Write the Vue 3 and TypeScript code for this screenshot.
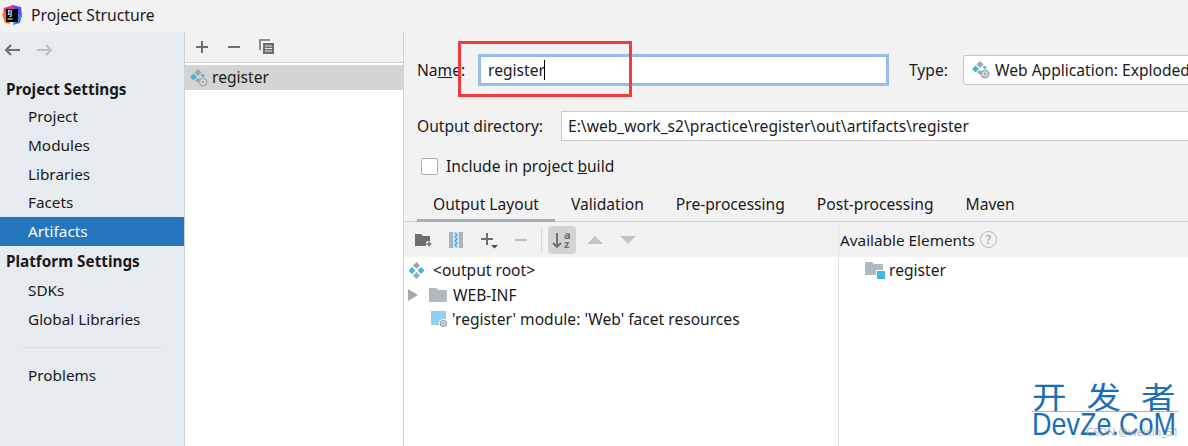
<script setup lang="ts">
const projectItems = ["Project", "Modules", "Libraries", "Facets", "Artifacts"];
const platformItems = ["SDKs", "Global Libraries"];
const tabs = ["Output Layout", "Validation", "Pre-processing", "Post-processing", "Maven"];
</script>

<template>
  <div class="window">
    <header class="titlebar">
      <svg class="logo" width="20" height="20" viewBox="0 0 20 20">
        <path d="M2 3 L11 0 L12 6 L1 10 Z" fill="#f5317f" />
        <path d="M10 0 L19 2 L20 12 L13 10 Z" fill="#5a4ee0" />
        <path d="M0 9 L6 6 L8 19 L3 18 Z" fill="#f97a12" />
        <path d="M13 10 L20 9 L18 18 L11 20 Z" fill="#3a7ff0" />
        <rect x="4" y="4" width="12" height="13" fill="#000" />
        <text x="5.5" y="10" class="logo-text">IJ</text>
        <rect x="5.500" y="13.500" width="5" height="1" fill="#fff" />
      </svg>
      <span>Project Structure</span>
    </header>

    <div class="body">
      <aside class="sidebar">
        <div class="nav-arrows">
          <svg width="18" height="14" viewBox="0 0 18 14">
            <path d="M17 7H3M8 2L3 7l5 5" fill="none" stroke="#6e6e6e" stroke-width="2" />
          </svg>
          <svg width="18" height="14" viewBox="0 0 18 14">
            <path d="M1 7h14M10 2l5 5-5 5" fill="none" stroke="#bdbdbd" stroke-width="2" />
          </svg>
        </div>
        <h3 class="side-heading first">Project Settings</h3>
        <div
          v-for="item in projectItems"
          :key="item"
          class="side-item"
          :class="{ selected: item === 'Artifacts' }"
        >
          {{ item }}
        </div>
        <h3 class="side-heading">Platform Settings</h3>
        <div v-for="item in platformItems" :key="item" class="side-item">{{ item }}</div>
        <div class="side-sep"></div>
        <div class="side-item">Problems</div>
      </aside>

      <section class="artifact-list">
        <div class="list-toolbar">
          <svg width="14" height="14" viewBox="0 0 14 14">
            <path d="M7 1v12M1 7h12" stroke="#6e6e6e" stroke-width="2" />
          </svg>
          <svg width="14" height="14" viewBox="0 0 14 14">
            <path d="M1 7h12" stroke="#6e6e6e" stroke-width="2" />
          </svg>
          <svg width="16" height="16" viewBox="0 0 16 16">
            <path d="M1 11V1h10" fill="none" stroke="#6e6e6e" stroke-width="1.6" />
            <rect x="4" y="4" width="11" height="11" fill="#6e6e6e" />
            <path d="M6 7h7M6 9.500h7M6 12h7" stroke="#e8e8e8" stroke-width="1" />
          </svg>
        </div>
        <div class="artifact-row">
          <svg class="art-icon" width="18" height="18" viewBox="0 0 18 18">
            <path d="M8 0l3.500 3.500L8 7 4.500 3.500Z" fill="#9aa7b0" />
            <path d="M3.500 4.500L7 8l-3.500 3.500L0 8Z" fill="#40b6e0" />
            <path d="M12.500 4.500L15 7l-2 1-2.500-1.500Z" fill="#40b6e0" />
            <path d="M8 9l2 2-2 3-3-3Z" fill="#9aa7b0" />
            <circle cx="13" cy="13" r="4.500" fill="#a5aeb5" />
            <circle cx="13" cy="13" r="2.200" fill="none" stroke="#fff" stroke-width="1" />
          </svg>
          <span>register</span>
        </div>
      </section>

      <main class="detail">
        <div class="name-row">
          <label class="name-label">Na<u>m</u>e:</label>
          <div class="name-input">register<i class="caret"></i></div>
          <label class="type-label">Type:</label>
          <div class="type-select">
            <svg width="18" height="18" viewBox="0 0 18 18">
              <path d="M8 0l3.500 3.500L8 7 4.500 3.500Z" fill="#9aa7b0" />
              <path d="M3.500 4.500L7 8l-3.500 3.500L0 8Z" fill="#40b6e0" />
              <path d="M12.500 4.500L15 7l-2 1-2.500-1.500Z" fill="#40b6e0" />
              <path d="M8 9l2 2-2 3-3-3Z" fill="#9aa7b0" />
              <circle cx="13" cy="13" r="4.500" fill="#a5aeb5" />
              <circle cx="13" cy="13" r="2.200" fill="none" stroke="#fff" stroke-width="1" />
            </svg>
            <span>Web Application: Exploded</span>
          </div>
        </div>

        <div class="output-row">
          <label>Output directory:</label>
          <div class="output-input">E:\web_work_s2\practice\register\out\artifacts\register</div>
        </div>

        <div class="check-row">
          <span class="checkbox"></span>
          <span>Include in project <u>b</u>uild</span>
        </div>

        <nav class="tabs">
          <div v-for="(tab, i) in tabs" :key="tab" class="tab" :class="{ active: i === 0 }">
            {{ tab }}
          </div>
        </nav>

        <div class="layout-pane">
          <div class="left-col">
            <div class="layout-toolbar">
              <svg width="20" height="16" viewBox="0 0 20 16">
                <path d="M1 2h6l2 2h7v10H1Z" fill="#6e6e6e" />
                <path d="M15 9v6M12 12h6" stroke="#f2f2f2" stroke-width="4" />
                <path d="M15 9.500v5M12.500 12h5" stroke="#6e6e6e" stroke-width="1.600" />
              </svg>
              <svg class="zip" width="14" height="18" viewBox="0 0 14 18">
                <rect x="0" y="1" width="14" height="16" fill="#a9b4bb" />
                <rect x="4" y="1" width="6" height="16" fill="#d8e6ec" />
                <path d="M6 2l2 2-2 2 2 2-2 2 2 2-2 2 2 2" fill="none" stroke="#40b6e0" stroke-width="1.500" />
              </svg>
              <svg class="add" width="20" height="18" viewBox="0 0 20 18">
                <path d="M7 2v12M1 8h12" stroke="#6e6e6e" stroke-width="2" />
                <path d="M11 14h7l-3.500 3.500Z" fill="#4a4a4a" />
              </svg>
              <svg class="remove" width="14" height="14" viewBox="0 0 14 14">
                <path d="M1 7h12" stroke="#bcbcbc" stroke-width="2" />
              </svg>
              <span class="tool-sep"></span>
              <span class="sort-btn">
                <svg width="24" height="24" viewBox="0 0 24 24">
                  <path d="M7 5v14M3 15l4 4 4-4" fill="none" stroke="#6e6e6e" stroke-width="1.900" />
                  <text x="14" y="11" class="sort-text">a</text>
                  <text x="14" y="20" class="sort-text">z</text>
                </svg>
              </span>
              <svg class="tri-up" width="16" height="8" viewBox="0 0 16 8">
                <path d="M0 8L8 0l8 8Z" fill="#c4c4c4" />
              </svg>
              <svg class="tri-down" width="16" height="8" viewBox="0 0 16 8">
                <path d="M0 0h16L8 8Z" fill="#c4c4c4" />
              </svg>
            </div>
            <div class="tree">
              <div class="tree-row root">
                <svg width="17" height="17" viewBox="0 0 17 17">
                  <path d="M8.500 0l3.500 3.500L8.500 7 5 3.500Z" fill="#9aa7b0" />
                  <path d="M4 5l3.500 3.500L4 12 .5 8.500Z" fill="#40b6e0" />
                  <path d="M13 5l3.500 3.500L13 12 9.500 8.500Z" fill="#40b6e0" />
                  <path d="M8.500 10l3.500 3.500L8.500 17 5 13.500Z" fill="#9aa7b0" />
                </svg>
                <span>&lt;output root&gt;</span>
              </div>
              <div class="tree-row inf">
                <svg width="10" height="12" viewBox="0 0 10 12">
                  <path d="M0 0l10 6-10 6Z" fill="#a8a8a8" />
                </svg>
                <svg class="folder" width="18" height="14" viewBox="0 0 18 14">
                  <path d="M0 0h7l2 2h9v12H0Z" fill="#aeb9c0" />
                </svg>
                <span>WEB-INF</span>
              </div>
              <div class="tree-row facet">
                <svg width="17" height="18" viewBox="0 0 17 18">
                  <path d="M0 1h15v14H0Z" fill="#8fd2ef" />
                  <circle cx="12.500" cy="13.500" r="4.500" fill="#fff" />
                  <circle cx="12.500" cy="13.500" r="3.600" fill="#9aa7b0" />
                  <circle cx="12.500" cy="13.500" r="1.700" fill="none" stroke="#fff" stroke-width="0.900" />
                </svg>
                <span>'register' module: 'Web' facet resources</span>
              </div>
            </div>
          </div>

          <div class="right-col">
            <div class="avail-head">
              <span>Available Elements</span>
              <span class="help">?</span>
            </div>
            <div class="avail-body">
              <svg width="20" height="18" viewBox="0 0 20 18">
                <path d="M0 1h7l2 2h9v11H0Z" fill="#aeb9c0" />
                <rect x="11" y="9" width="9" height="9" fill="#fff" />
                <rect x="12" y="10" width="8" height="8" fill="#40b6e0" />
              </svg>
              <span>register</span>
            </div>
          </div>
        </div>
      </main>
    </div>

    <div class="red-box"></div>

    <div class="watermark">
      <div class="wm-cn"><span>开发者</span></div>
      <div class="wm-en">DevZe.CoM</div>
      <div class="wm-faint">CSDN @weixin_51</div>
    </div>
  </div>
</template>

<style>
html,
body {
  margin: 0;
  background: #fff;
}
</style>

<style scoped>
.window {
  position: relative;
  width: 1188px;
  height: 446px;
  overflow: hidden;
  display: flex;
  flex-direction: column;
  background: #f2f2f2;
  color: #1a1a1a;
  font-family: "Noto Sans", "Open Sans", sans-serif;
  font-size: 15.6px;
}

.titlebar {
  height: 32px;
  flex: none;
  display: flex;
  align-items: center;
  gap: 9px;
  padding-left: 2px;
  font-size: 15.7px;
  background: #f2f2f2;
}

.titlebar span {
  margin-top: -2px;
}

.logo {
  margin-top: -3px;
}

.logo-text {
  font-size: 6.5px;
  font-weight: 700;
  fill: #fff;
}

.body {
  flex: 1;
  display: flex;
  min-height: 0;
}

.sidebar {
  width: 184px;
  flex: none;
  background: #e6ebf0;
  border-right: 1px solid #d1d1d1;
  font-size: 15.3px;
}

.nav-arrows {
  height: 36px;
  display: flex;
  align-items: center;
  gap: 15px;
  padding: 0 0 0 3px;
}

.side-heading {
  margin: 0;
  height: 30px;
  line-height: 30px;
  padding-left: 6px;
  font-size: 15.3px;
  font-weight: 700;
}

.side-heading.first {
  margin-top: 8px;
  height: 26px;
  line-height: 26px;
}

.side-item {
  height: 28.8px;
  line-height: 28.8px;
  padding-left: 28px;
}

.side-item.selected {
  background: #2675bf;
  color: #fff;
}

.side-sep {
  height: 1px;
  margin: 13px 20px 13px;
  background: #dcdfe3;
}

.artifact-list {
  width: 218px;
  flex: none;
  background: #fff;
  border-right: 1px solid #d1d1d1;
}

.list-toolbar {
  height: 30px;
  display: flex;
  align-items: center;
  gap: 18px;
  padding-left: 10px;
  background: #f2f2f2;
  border-bottom: 1px solid #d1d1d1;
}

.artifact-row {
  margin-top: 2px;
  height: 25px;
  display: flex;
  align-items: center;
  gap: 4px;
  padding-left: 5px;
  background: #d4d4d4;
}

.artifact-row span {
  margin-top: -2px;
}

.detail {
  flex: 1;
  min-width: 0;
  display: flex;
  flex-direction: column;
}

.name-row {
  height: 34px;
  margin-top: 21px;
  display: flex;
  align-items: center;
  padding-left: 13px;
}

.name-label {
  width: 63px;
  flex: none;
}

.name-input {
  width: 398px;
  height: 26px;
  flex: none;
  display: flex;
  align-items: center;
  padding-left: 7px;
  background: #fff;
  border: 1px solid #8fbbe9;
  box-shadow: 0 0 0 2px #97bfea;
  box-sizing: content-box;
}

.caret {
  width: 1px;
  height: 20px;
  margin-left: -1px;
  background: #000;
}

.type-label {
  margin-left: 22px;
  width: 54px;
  flex: none;
}

.type-select {
  width: 240px;
  height: 28px;
  flex: none;
  display: flex;
  align-items: center;
  gap: 5px;
  padding-left: 8px;
  white-space: nowrap;
  background: #fff;
  border: 1px solid #c4c4c4;
  border-radius: 3px;
}

.output-row {
  margin-top: 24px;
  height: 30px;
  display: flex;
  align-items: center;
  padding-left: 13px;
}

.output-row label {
  width: 144px;
  flex: none;
}

.output-input {
  flex: 1;
  height: 28px;
  line-height: 28px;
  padding-left: 6px;
  background: #fff;
  border: 1px solid #c9c9c9;
  border-right: none;
}

.check-row {
  margin-top: 10px;
  height: 30px;
  display: flex;
  align-items: center;
  gap: 8px;
  padding-left: 17px;
}

.checkbox {
  width: 15px;
  height: 15px;
  background: #fff;
  border: 1px solid #b0b0b0;
  border-radius: 2px;
}

.tabs {
  margin-top: 6px;
  height: 35px;
  flex: none;
  display: flex;
  padding-left: 13px;
  box-sizing: border-box;
  border-bottom: 1px solid #d1d1d1;
  font-size: 15.6px;
}

.tab {
  height: 35px;
  line-height: 35px;
  padding: 0 16px;
  box-sizing: border-box;
  white-space: nowrap;
}

.tab.active {
  border-bottom: 3px solid #a3aebd;
}

.layout-pane {
  flex: 1;
  display: flex;
  min-height: 0;
}

.left-col {
  width: 434px;
  flex: none;
  border-right: 1px solid #e6e6e6;
  background: #fff;
}

.layout-toolbar {
  height: 35px;
  display: flex;
  align-items: center;
  padding-left: 10px;
  background: #f2f2f2;
}

.zip {
  margin-left: 15px;
}

.add {
  margin-left: 17px;
}

.remove {
  margin-left: 14px;
}

.tool-sep {
  width: 1px;
  height: 24px;
  margin: 0 6px 0 13px;
  background: #d6d6d6;
}

.sort-btn {
  width: 28px;
  height: 28px;
  display: flex;
  align-items: center;
  justify-content: center;
  background: #d3d3d3;
  border-radius: 4px;
}

.sort-text {
  font-size: 11px;
  font-weight: 700;
  fill: #6e6e6e;
}

.tri-up {
  margin-left: 11px;
}

.tri-down {
  margin-left: 17px;
}

.tree {
  padding-top: 1px;
}

.tree-row {
  height: 24.5px;
  display: flex;
  align-items: center;
}

.tree-row.root {
  padding-left: 4px;
  gap: 8px;
}

.tree-row.inf {
  padding-left: 4px;
}

.folder {
  margin: 0 6px 0 11px;
}

.tree-row.facet {
  padding-left: 27px;
  gap: 4px;
}

.right-col {
  flex: 1;
  min-width: 0;
  background: #fff;
}

.avail-head {
  height: 35px;
  display: flex;
  align-items: center;
  gap: 5px;
  padding-left: 1px;
  font-size: 15.3px;
  background: #f2f2f2;
}

.help {
  width: 15px;
  height: 15px;
  display: flex;
  align-items: center;
  justify-content: center;
  font-size: 12px;
  color: #9a9a9a;
  border: 1.5px solid #b5b5b5;
  border-radius: 50%;
}

.avail-body {
  display: flex;
  align-items: center;
  gap: 4px;
  padding: 0 0 0 26px;
  height: 25px;
}

.red-box {
  position: absolute;
  left: 458px;
  top: 41px;
  width: 168px;
  height: 50px;
  border: 3px solid #f53a3d;
}

.watermark {
  position: absolute;
  left: 1032px;
  top: 380px;
  width: 146px;
  color: #1a6fb8;
}

.wm-cn {
  height: 31px;
  border-bottom: 1px solid #7ec4e8;
  font-family: "Noto Sans CJK SC", sans-serif;
  font-size: 30px;
  line-height: 30px;
  white-space: nowrap;
}

.wm-cn span {
  display: inline-block;
  letter-spacing: 17.4px;
  transform: scaleX(1.15);
  transform-origin: left top;
}

.wm-en {
  margin-top: -1px;
  font-family: "Liberation Sans", sans-serif;
  font-size: 27px;
  line-height: 24px;
  white-space: nowrap;
  transform: scaleY(1.15);
  transform-origin: left top;
}

.wm-faint {
  position: absolute;
  left: 54px;
  top: 44px;
  font-size: 11px;
  color: #9a9a9a;
  opacity: 0.7;
  white-space: nowrap;
}
</style>
